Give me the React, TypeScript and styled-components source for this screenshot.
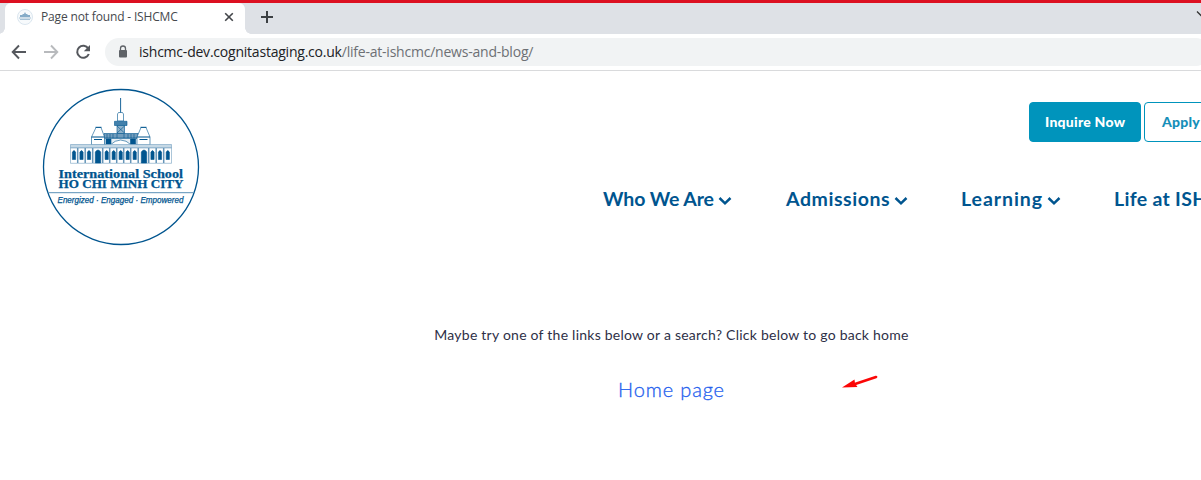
import React from "react";
import styled, { createGlobalStyle } from "styled-components";

const navy = "#00558f";

const GlobalStyle = createGlobalStyle`
  * { box-sizing: border-box; }
  html, body { margin: 0; background: #fff; overflow: hidden; }
`;

const Page = styled.div`
  width: 100vw;
  height: 480px;
  overflow: hidden;
  display: flex;
  flex-direction: column;
  border-top: 3px solid #dc1021;
  font-family: Lato, sans-serif;
`;

const TabStrip = styled.div`
  height: 31px;
  flex: none;
  display: flex;
  background: #dee1e6;
  padding-left: 5px;
`;

const Tab = styled.div`
  width: 240px;
  background: #fff;
  border-radius: 6px 6px 0 0;
  display: flex;
  align-items: center;
  padding: 0 9px 3px 12px;
  position: relative;
  &::before, &::after {
    content: "";
    position: absolute;
    bottom: 0;
    width: 6px;
    height: 6px;
  }
  &::before { left: -6px; background: radial-gradient(circle at 0 0, transparent 5.5px, #fff 6px); }
  &::after { right: -6px; background: radial-gradient(circle at 100% 0, transparent 5.5px, #fff 6px); }
`;

const TabTitle = styled.span`
  flex: 1;
  margin-left: 8px;
  font: 12px/16px "Open Sans", sans-serif;
  letter-spacing: -0.16px;
  color: #45484d;
  white-space: nowrap;
`;

const NewTab = styled.div`
  padding: 7px 0 0 15px;
  flex: 1;
`;

const WindowMenu = styled.div`
  width: 5px;
  padding-top: 7px;
  overflow: hidden;
`;

const Glyph = styled.svg`
  display: block;
  flex: none;
`;

const Toolbar = styled.div`
  height: 37px;
  flex: none;
  display: flex;
  align-items: center;
  padding-left: 11px;
  border-bottom: 1px solid #d9dadc;
`;

const NavIcons = styled.div`
  display: flex;
  gap: 16px;
  width: 94px;
`;

const AddressBar = styled.div`
  flex: 1;
  height: 28px;
  margin-right: -9px;
  border-radius: 14px;
  background: #f1f3f4;
  display: flex;
  align-items: center;
  padding-left: 13px;
`;

const Url = styled.span`
  margin-left: 11px;
  font: 14px/20px "Open Sans", sans-serif;
  letter-spacing: -0.22px;
  color: #202124;
  white-space: nowrap;
`;

const UrlPath = styled.span`
  color: #6d7074;
`;

const Header = styled.header`
  height: 175px;
  flex: none;
  display: flex;
  padding: 17px 0 0 42px;
`;

const HeaderRight = styled.div`
  flex: 1;
  min-width: 0;
  display: flex;
  flex-direction: column;
`;

const Actions = styled.div`
  display: flex;
  gap: 3px;
  margin: 14px 0 0 829px;
`;

const Button = styled.button<{ $outline?: boolean }>`
  width: 112px;
  height: 40px;
  flex: none;
  padding: 0 0 0 ${(p) => (p.$outline ? 17 : 15)}px;
  text-align: left;
  border: 1px solid #0094bc;
  border-radius: 4px;
  background: ${(p) => (p.$outline ? "#fff" : "#0094bc")};
  color: ${(p) => (p.$outline ? "#168fb9" : "#fff")};
  font: 900 14px/20px Lato, sans-serif;
  letter-spacing: 0.25px;
  white-space: nowrap;
`;

const Nav = styled.nav`
  display: flex;
  margin: 45px 0 0 403px;
`;

const NavItem = styled.a<{ $width: number; $track: number }>`
  width: ${(p) => p.$width}px;
  flex: none;
  display: flex;
  align-items: center;
  color: ${navy};
  font: 700 19.5px/24px Lato, sans-serif;
  letter-spacing: ${(p) => p.$track}px;
  white-space: nowrap;
  svg { margin: 3px 0 0 4px; }
`;

const Main = styled.main`
  display: flex;
  flex-direction: column;
  align-items: center;
  padding: 79px 0 0 142px;
  position: relative;
`;

const Message = styled.p`
  margin: 0;
  font-size: 14px;
  line-height: 20px;
  letter-spacing: 0.24px;
  color: #2e3047;
  white-space: nowrap;
`;

const HomeLink = styled.a`
  margin-top: 32px;
  font-size: 20px;
  font-weight: 300;
  line-height: 24px;
  letter-spacing: 0.85px;
  color: #2460ee;
  -webkit-text-stroke: 0.3px #2460ee;
`;

const Pointer = styled.svg`
  position: absolute;
  left: 840px;
  top: 127px;
`;

const Building = () => (
  <g fill={navy} stroke={navy} strokeWidth="0.6">
    <path d="M120.6 98v15" strokeWidth="0.9" />
    <path d="M117.5 121v-7l1-1.5h4l1 1.5v7z" fill="#fff" />
    <path d="M114.5 121.3h12.5v4.2h-12.5z" fill="#4280ab" />
    <path d="M117 125.5h7.5v8h-7.5zM117 126l7.5 7M124.5 126l-7.5 7" fill="#8eb1ca" />
    <path d="M104 133.5h34v4.5h-34z" fill="#729dbd" />
    <path d="M107 134v4M110 134v4M113 134v4M117 134v4M124 134v4M128 134v4M131 134v4M134 134v4" />
    <path d="M104 138.5h34v6h-34z" fill="#e6eef4" />
    <path d="M106 139h5v5h-5zM130.5 139h5v5h-5z" />
    <path d="M110 145q10.6-10 21.4 0" fill="#fff" />
    <path d="M91.5 137h13v8h-13zM137 137h13v8h-13zM91.5 137l4.5-9.500h5l3.500 9.500zM137 137l4-9.500h5l4 9.500z" fill="#fff" />
    <path d="M95.5 127.3h6M140.5 127.3h6M94 139.5h8M139.5 139.5h8" strokeWidth="1" />
    <path d="M70.5 144.5h101v3.5h-101z" fill="#c5d8e5" stroke="#73a0c0" />
    <path d="M70.5 148h101v15.3h-101z" fill="#fff" stroke="#73a0c0" />
    {[78, 85.5, 93, 103, 110, 117, 124, 131, 138.5, 149, 156.5, 164].map((x) => (
      <path key={x} d={`M${x - 0.3} 148v15`} stroke="#6595b8" strokeWidth="1.5" />
    ))}
    {[74, 81.5, 89, 106.7, 113.7, 120.7, 127.7, 134.7, 152.5, 160, 167.8].map((x) => (
      <path key={x} d={`M${x - 1.6} 159.5v-7.5q1.6-3 3.2 0v7.5z`} />
    ))}
    {[98, 144].map((x) => (
      <path key={x} d={`M${x - 2.7} 163v-11q2.7-4 5.4 0v11z`} />
    ))}
  </g>
);

const Logo = () => (
  <Glyph width="158" height="158" viewBox="42 88 158 158">
    <circle cx="121" cy="167" r="77.5" fill="#fff" stroke={navy} strokeWidth="1.3" />
    <Building />
    <g fill={navy}>
      <g fontFamily="Liberation Serif, serif" fontWeight="700" fontSize="13" stroke={navy} strokeWidth="0.25">
        <text x="58.5" y="177.7" textLength="124.5" lengthAdjust="spacingAndGlyphs">International School</text>
        <text x="58.5" y="188.300" fontSize="11.5" textLength="125" lengthAdjust="spacingAndGlyphs">HO CHI MINH CITY</text>
      </g>
      <text x="57.5" y="203" fontFamily="Liberation Sans, sans-serif" fontStyle="italic" fontSize="8.400" stroke={navy} strokeWidth="0.25" textLength="126" lengthAdjust="spacingAndGlyphs">Energized · Engaged · Empowered</text>
    </g>
    <path d="M49 192.7h144" stroke="#5b90b7" />
  </Glyph>
);

const Favicon = () => (
  <Glyph width="16" height="16" viewBox="0 0 16 16">
    <circle cx="8" cy="8" r="7.5" fill="#f7fafc" stroke="#dbe6ef" />
    <path d="M3 8V6h2l1-1h1l1-2 1 2h1l1 1h2v2z" fill="#86acc8" />
    <path d="M2 9h12M3 10.5h10" stroke="#a6c1d5" />
  </Glyph>
);

const Chevron = () => (
  <Glyph width="14" height="10" viewBox="0 0 14 10">
    <path d="M1.5 2L7 7.3 12.5 2" fill="none" stroke={navy} strokeWidth="2.5" />
  </Glyph>
);

const Arrow = ({ color, flip }: { color: string; flip?: boolean }) => (
  <Glyph width="16" height="16" viewBox="0 0 16 16">
    <path d={flip ? "M1 8h13M8 1.5L14.3 8 8 14.5" : "M15 8H2M8 1.5L1.7 8 8 14.5"} fill="none" stroke={color} strokeWidth="1.9" />
  </Glyph>
);

export default function App() {
  return (
    <Page>
      <GlobalStyle />
      <TabStrip>
        <Tab>
          <Favicon />
          <TabTitle>Page not found - ISHCMC</TabTitle>
          <Glyph width="14" height="14" viewBox="0 0 14 14">
            <path d="M3.2 3.2l7.6 7.6M10.8 3.2l-7.6 7.6" stroke="#424549" strokeWidth="1.6" />
          </Glyph>
        </Tab>
        <NewTab>
          <Glyph width="14" height="14" viewBox="0 0 14 14">
            <path d="M7 1v12M1 7h12" stroke="#3c4043" strokeWidth="2" />
          </Glyph>
        </NewTab>
        <WindowMenu>
          <Glyph width="12" height="8" viewBox="0 0 12 8">
            <path d="M1 1.5l5 5 5-5" fill="none" stroke="#333" strokeWidth="1.3" />
          </Glyph>
        </WindowMenu>
      </TabStrip>
      <Toolbar>
        <NavIcons>
          <Arrow color="#55585d" />
          <Arrow color="#b8babd" flip />
          <Glyph width="16" height="16" viewBox="0 0 16 16">
            <path d="M13.3 4.6A6 6 0 1 0 13.8 10" fill="none" stroke="#55585d" strokeWidth="2" />
            <path d="M15 1v6.2H8.8z" fill="#55585d" />
          </Glyph>
        </NavIcons>
        <AddressBar>
          <Glyph width="10" height="14" viewBox="0 0 10 14">
            <path d="M2.5 6V3.5a2.5 2.5 0 0 1 5 0V6" fill="none" stroke="#5f6368" strokeWidth="1.3" />
            <rect x="1" y="5" width="8" height="7.5" rx="1" fill="#5f6368" />
          </Glyph>
          <Url>
            ishcmc-dev.cognitastaging.co.uk<UrlPath>/life-at-ishcmc/news-and-blog/</UrlPath>
          </Url>
        </AddressBar>
      </Toolbar>
      <Header>
        <Logo />
        <HeaderRight>
          <Actions>
            <Button>Inquire Now</Button>
            <Button $outline>Apply Now</Button>
          </Actions>
          <Nav>
            <NavItem $width={183} $track={-0.1}>Who We Are<Chevron /></NavItem>
            <NavItem $width={175} $track={0.55}>Admissions<Chevron /></NavItem>
            <NavItem $width={153} $track={0.95}>Learning<Chevron /></NavItem>
            <NavItem $width={160} $track={0.3}>Life at ISHCMC</NavItem>
          </Nav>
        </HeaderRight>
      </Header>
      <Main>
        <Message>Maybe try one of the links below or a search? Click below to go back home</Message>
        <HomeLink>Home page</HomeLink>
        <Pointer width="40" height="20" viewBox="0 0 40 20">
          <path d="M36 4L15 11" stroke="#fb0606" strokeWidth="2.6" strokeLinecap="round" />
          <path d="M2 14.5L14.5 6.5 15 10.5 17.5 14z" fill="#fb0606" />
        </Pointer>
      </Main>
    </Page>
  );
}
